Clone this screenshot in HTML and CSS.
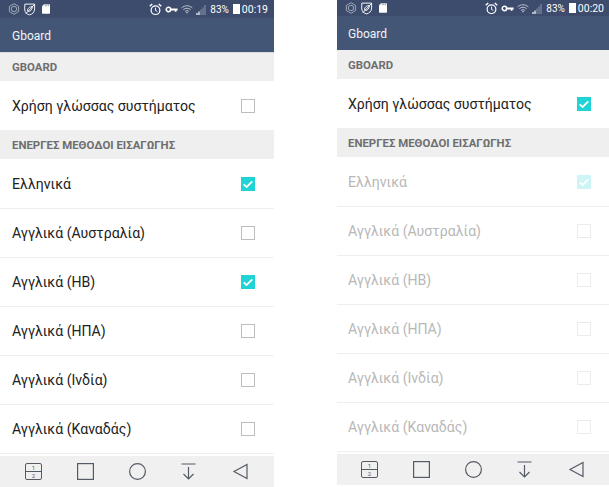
FILE: index.html
```html
<!DOCTYPE html>
<html>

<head>
  <meta charset="utf-8">
  <title>Gboard</title>
  <link rel="stylesheet" href="styles.css">
</head>

<body>
  <svg class="defs" width="0" height="0">
    <symbol id="ic-target" viewBox="0 0 14 14">
      <path d="M7 .8 12.4 4v6L7 13.200 1.600 10V4z" fill="none" stroke="#aeb6c6" stroke-width="1" />
      <circle cx="7" cy="7" r="3.200" fill="none" stroke="#aeb6c6" stroke-width="1" />
    </symbol>
    <symbol id="ic-shield" viewBox="0 0 14 14">
      <path d="M2 1.200h10.500v5.300c0 3.500-2.500 5.500-5.500 6.300C4 12 1.800 10 1.800 6.500z" fill="none" stroke="#fff" stroke-width="1" />
      <path d="M3 11.500 12.800 1.200M5 8.500c-.5-2.500 2-4.500 5-4.800 0 3-1.500 5.300-4 5.300z" fill="none" stroke="#fff" stroke-width="1" />
    </symbol>
    <symbol id="ic-sd" viewBox="0 0 10 12">
      <path d="M2.500 0H9a1 1 0 0 1 1 1v10a1 1 0 0 1-1 1H1a1 1 0 0 1-1-1V2.500z" fill="#fff" />
      <path d="M4 .5v2M6 .5v2M8 .5v2" stroke="#3d4c6c" stroke-width=".7" />
    </symbol>
    <symbol id="ic-alarm" viewBox="0 0 14 14">
      <circle cx="7" cy="7.700" r="4.700" fill="none" stroke="#fff" stroke-width="1.300" />
      <path d="M7 5v3l2 1.200" fill="none" stroke="#fff" stroke-width="1" />
      <path d="M.8 3.600 3.500 1M13.200 3.600 10.500 1" fill="none" stroke="#fff" stroke-width="1.500" />
    </symbol>
    <symbol id="ic-key" viewBox="0 0 14 8">
      <circle cx="3.500" cy="4" r="2.500" fill="none" stroke="#fff" stroke-width="1.800" />
      <path d="M6 2.800h8v2.200h-1.300v1.500h-2V5H6z" fill="#fff" />
    </symbol>
    <symbol id="ic-wifi" viewBox="0 0 14 10">
      <path d="M.7 3.200C4.500-.2 9.500-.2 13.300 3.200M2.700 5.200c2.600-2.200 6-2.200 8.600 0M4.700 7.200c1.400-1 3.200-1 4.600 0" fill="none" stroke="#dfe3ea" stroke-width=".9" />
      <path d="M5.800 8.500 7 7.800l1.200.7L7 9.800z" fill="#dfe3ea" />
    </symbol>
    <symbol id="ic-signal" viewBox="0 0 11 11">
      <path d="M1 11V9M3 11V7.500" stroke="#fff" stroke-width="1.200" />
      <path d="M5 11V5.500M7 11V3.500M9 11V1" stroke="#8b97ad" stroke-width="1" />
    </symbol>
    <symbol id="ic-check" viewBox="0 0 14 14">
      <rect width="14" height="14" fill="#1fd3d6" />
      <path d="M2.700 7.300 5.600 10l5.700-5.600" fill="none" stroke="#fff" stroke-width="1.800" />
    </symbol>
    <symbol id="ic-square" viewBox="0 0 17 17">
      <rect x=".6" y=".6" width="15.800" height="15.800" fill="none" stroke="#555b66" stroke-width="1.200" />
    </symbol>
    <symbol id="ic-circle" viewBox="0 0 17 17">
      <circle cx="8.500" cy="8.500" r="7.900" fill="none" stroke="#555b66" stroke-width="1.200" />
    </symbol>
    <symbol id="ic-down" viewBox="0 0 17 17">
      <path d="M1.500 1h14M8.500 4v12M3.500 11l5 5 5-5" fill="none" stroke="#555b66" stroke-width="1.200" />
    </symbol>
    <symbol id="ic-back" viewBox="0 0 17 17">
      <path d="M15 1.500v14L2 8.500z" fill="none" stroke="#555b66" stroke-width="1.200" />
    </symbol>
  </svg>

  <div class="page">

    <div class="phone">
      <div class="statusbar">
        <div class="status-left">
          <svg class="st-target"><use href="#ic-target" /></svg>
          <svg class="st-shield"><use href="#ic-shield" /></svg>
          <svg class="st-sd"><use href="#ic-sd" /></svg>
        </div>
        <div class="status-right">
          <svg class="st-alarm"><use href="#ic-alarm" /></svg>
          <svg class="st-key"><use href="#ic-key" /></svg>
          <svg class="st-wifi"><use href="#ic-wifi" /></svg>
          <svg class="st-signal"><use href="#ic-signal" /></svg>
          <span class="st-pct">83%</span>
          <span class="st-batt"></span>
          <span class="st-time">00:19</span>
        </div>
      </div>
      <div class="appbar">Gboard</div>
      <div class="section">GBOARD</div>
      <div class="row row-last">
        <span>Χρήση γλώσσας συστήματος</span>
        <span class="box"></span>
      </div>
      <div class="section section-tall">ΕΝΕΡΓΕΣ ΜΕΘΟΔΟΙ ΕΙΣΑΓΩΓΗΣ</div>
      <div class="row">
        <span>Ελληνικά</span>
        <svg class="tick"><use href="#ic-check" /></svg>
      </div>
      <div class="row">
        <span>Αγγλικά (Αυστραλία)</span>
        <span class="box"></span>
      </div>
      <div class="row">
        <span>Αγγλικά (ΗΒ)</span>
        <svg class="tick"><use href="#ic-check" /></svg>
      </div>
      <div class="row">
        <span>Αγγλικά (ΗΠΑ)</span>
        <span class="box"></span>
      </div>
      <div class="row">
        <span>Αγγλικά (Ινδία)</span>
        <span class="box"></span>
      </div>
      <div class="row">
        <span>Αγγλικά (Καναδάς)</span>
        <span class="box"></span>
      </div>
      <div class="navbar">
        <div class="split">
          <span>1</span>
          <span>2</span>
        </div>
        <svg class="nav-ic"><use href="#ic-square" /></svg>
        <svg class="nav-ic"><use href="#ic-circle" /></svg>
        <svg class="nav-ic"><use href="#ic-down" /></svg>
        <svg class="nav-ic"><use href="#ic-back" /></svg>
      </div>
    </div>

    <div class="phone phone-second">
      <div class="statusbar">
        <div class="status-left">
          <svg class="st-target"><use href="#ic-target" /></svg>
          <svg class="st-shield"><use href="#ic-shield" /></svg>
          <svg class="st-sd"><use href="#ic-sd" /></svg>
        </div>
        <div class="status-right">
          <svg class="st-alarm"><use href="#ic-alarm" /></svg>
          <svg class="st-key"><use href="#ic-key" /></svg>
          <svg class="st-wifi"><use href="#ic-wifi" /></svg>
          <svg class="st-signal"><use href="#ic-signal" /></svg>
          <span class="st-pct">83%</span>
          <span class="st-batt"></span>
          <span class="st-time">00:20</span>
        </div>
      </div>
      <div class="appbar">Gboard</div>
      <div class="section">GBOARD</div>
      <div class="row row-last">
        <span>Χρήση γλώσσας συστήματος</span>
        <svg class="tick"><use href="#ic-check" /></svg>
      </div>
      <div class="section section-tall">ΕΝΕΡΓΕΣ ΜΕΘΟΔΟΙ ΕΙΣΑΓΩΓΗΣ</div>
      <div class="row off">
        <span>Ελληνικά</span>
        <svg class="tick"><use href="#ic-check" /></svg>
      </div>
      <div class="row off">
        <span>Αγγλικά (Αυστραλία)</span>
        <span class="box"></span>
      </div>
      <div class="row off">
        <span>Αγγλικά (ΗΒ)</span>
        <span class="box"></span>
      </div>
      <div class="row off">
        <span>Αγγλικά (ΗΠΑ)</span>
        <span class="box"></span>
      </div>
      <div class="row off">
        <span>Αγγλικά (Ινδία)</span>
        <span class="box"></span>
      </div>
      <div class="row off">
        <span>Αγγλικά (Καναδάς)</span>
        <span class="box"></span>
      </div>
      <div class="navbar">
        <div class="split">
          <span>1</span>
          <span>2</span>
        </div>
        <svg class="nav-ic"><use href="#ic-square" /></svg>
        <svg class="nav-ic"><use href="#ic-circle" /></svg>
        <svg class="nav-ic"><use href="#ic-down" /></svg>
        <svg class="nav-ic"><use href="#ic-back" /></svg>
      </div>
    </div>

  </div>
</body>

</html>
```

FILE: styles.css
```css
html,
body {
  margin: 0;
  padding: 0;
  background: #fff;
  font-family: Roboto, "Liberation Sans", sans-serif;
  overflow: hidden;
}

.defs {
  display: block;
  height: 0;
}

.page {
  display: flex;
  justify-content: space-between;
  width: 609px;
  height: 487px;
}

.phone {
  width: 274px;
  display: flex;
  flex-direction: column;
}

.phone-second {
  width: 272px;
}

/* status bar */
.statusbar {
  height: 18px;
  flex: none;
  background: #3d4c6c;
  color: #fff;
  display: flex;
  justify-content: space-between;
  align-items: center;
  padding: 0 6px 0 8px;
  box-sizing: border-box;
}

.phone-second .statusbar {
  height: 16px;
  padding: 0 5px 0 8px;
}

.status-left,
.status-right {
  display: flex;
  align-items: center;
}

.st-target {
  width: 12px;
  height: 12px;
}

.st-shield {
  width: 13px;
  height: 13px;
  margin-left: 3px;
}

.st-sd {
  width: 8px;
  height: 10px;
  margin-left: 6px;
}

.st-alarm {
  width: 13px;
  height: 13px;
}

.st-key {
  width: 13px;
  height: 7px;
  margin-left: 3px;
}

.st-wifi {
  width: 12px;
  height: 9px;
  margin-left: 3px;
}

.st-signal {
  width: 11px;
  height: 11px;
  margin-left: 3px;
}

.st-pct {
  font-size: 10px;
  margin-left: 3px;
}

.st-batt {
  width: 7px;
  height: 10px;
  background: #fff;
  margin-left: 4px;
}

.st-time {
  font-size: 10.500px;
  margin-left: 2px;
}

/* app bar */
.appbar {
  height: 33px;
  flex: none;
  background: #445675;
  color: #f2f4f7;
  font-size: 12px;
  display: flex;
  align-items: center;
  padding: 1px 0 0 12px;
  border-bottom: 1px solid #d5d9e0;
}

.phone-second .appbar {
  border-bottom: 0;
  padding-left: 11px;
}

.section {
  height: 28px;
  flex: none;
  background: #efefef;
  color: #6e6e6e;
  font-size: 11.400px;
  font-weight: 700;
  display: flex;
  align-items: center;
  padding-left: 12px;
}

.phone-second .section {
  height: 29px;
  padding-left: 11px;
}

.section-tall,
.phone-second .section-tall {
  height: 29px;
  margin-bottom: 1px;
}

.row {
  height: 48px;
  flex: none;
  border-bottom: 1px solid #efefef;
  display: flex;
  justify-content: space-between;
  align-items: center;
  padding: 0 19px 0 12px;
  font-size: 14.100px;
  color: #222;
}

.phone-second .row {
  padding: 0 18px 0 11px;
}

.row-last {
  border-bottom: 0;
  height: 49px;
}

.box {
  width: 12px;
  height: 12px;
  border: 1px solid #bdbdbd;
  display: block;
}

.tick {
  width: 14px;
  height: 14px;
  display: block;
}

.off {
  color: #b8b8b8;
}

.off .box {
  border-color: #ececec;
}

.off .tick {
  opacity: .22;
}

/* bottom nav */
.navbar {
  height: 31px;
  flex: none;
  margin-top: 2px;
  background: #f0f0f0;
  display: flex;
  justify-content: space-between;
  align-items: center;
  padding: 0 25px;
}

.phone-second .navbar {
  padding: 0 24px;
}

.nav-ic {
  width: 17px;
  height: 17px;
}

.split {
  width: 15px;
  height: 15px;
  border: 1px solid #555b66;
  border-radius: 2px;
  display: flex;
  flex-direction: column;
  font-size: 6px;
  line-height: 7px;
  text-align: center;
  color: #555b66;
}

.split span {
  height: 7px;
}

.split span + span {
  border-top: 1px solid #555b66;
}
```
